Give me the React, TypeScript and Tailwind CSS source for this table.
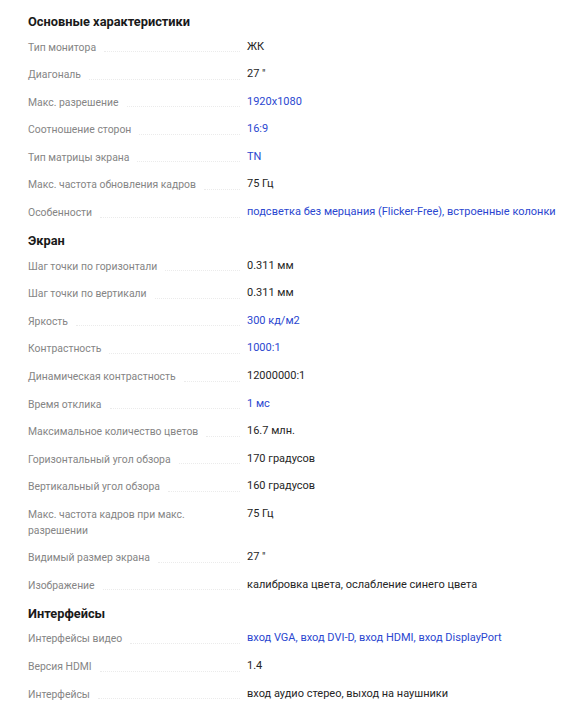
import React from "react";

type Row = { label: string; value: string; link?: boolean; multi?: boolean };
type Section = { title: string; rows: Row[] };

const sections: Section[] = [
  {
    title: "Основные характеристики",
    rows: [
      { label: "Тип монитора", value: "ЖК" },
      { label: "Диагональ", value: "27 \"" },
      { label: "Макс. разрешение", value: "1920x1080", link: true },
      { label: "Соотношение сторон", value: "16:9", link: true },
      { label: "Тип матрицы экрана", value: "TN", link: true },
      { label: "Макс. частота обновления кадров", value: "75 Гц" },
      { label: "Особенности", value: "подсветка без мерцания (Flicker-Free), встроенные колонки", link: true },
    ],
  },
  {
    title: "Экран",
    rows: [
      { label: "Шаг точки по горизонтали", value: "0.311 мм" },
      { label: "Шаг точки по вертикали", value: "0.311 мм" },
      { label: "Яркость", value: "300 кд/м2", link: true },
      { label: "Контрастность", value: "1000:1", link: true },
      { label: "Динамическая контрастность", value: "12000000:1" },
      { label: "Время отклика", value: "1 мс", link: true },
      { label: "Максимальное количество цветов", value: "16.7 млн." },
      { label: "Горизонтальный угол обзора", value: "170 градусов" },
      { label: "Вертикальный угол обзора", value: "160 градусов" },
      { label: "Макс. частота кадров при макс. разрешении", value: "75 Гц", multi: true },
      { label: "Видимый размер экрана", value: "27 \"" },
      { label: "Изображение", value: "калибровка цвета, ослабление синего цвета" },
    ],
  },
  {
    title: "Интерфейсы",
    rows: [
      { label: "Интерфейсы видео", value: "вход VGA, вход DVI-D, вход HDMI, вход DisplayPort", link: true },
      { label: "Версия HDMI", value: "1.4" },
      { label: "Интерфейсы", value: "вход аудио стерео, выход на наушники" },
    ],
  },
];

export default function App() {
  return (
    <div
      className="w-[571px] bg-white pl-[28px] pt-[13px]"
      style={{ fontFamily: "Roboto, 'Noto Sans', sans-serif" }}
    >
      {sections.map((s, si) => (
        <div key={si} className={si === 0 ? "" : "mt-[6px]"}>
          <h2 className="text-[12.8px] leading-[18px] font-bold text-[#1a1a1a] mb-[2px]">{s.title}</h2>
          {s.rows.map((r, ri) => (
            <div key={ri} className="flex items-start py-[5.5px] leading-[15.6px]">
              <div className="flex w-[219px] shrink-0 items-end pt-[1px]">
                <span className={(r.multi ? "max-w-[170px] " : "max-w-[190px] ") + "text-[10.4px] text-[#858585]"}>{r.label}</span>
                {!r.multi && (
                  <span className="flex-1 ml-[8px] mr-[7px] mb-[3px] border-b border-dotted border-[#ebebeb]" />
                )}
              </div>
              <div className={"whitespace-nowrap text-[11px] " + (r.link ? "text-[#2b47d0]" : "text-[#262626]")}>{r.value}</div>
            </div>
          ))}
        </div>
      ))}
    </div>
  );
}
